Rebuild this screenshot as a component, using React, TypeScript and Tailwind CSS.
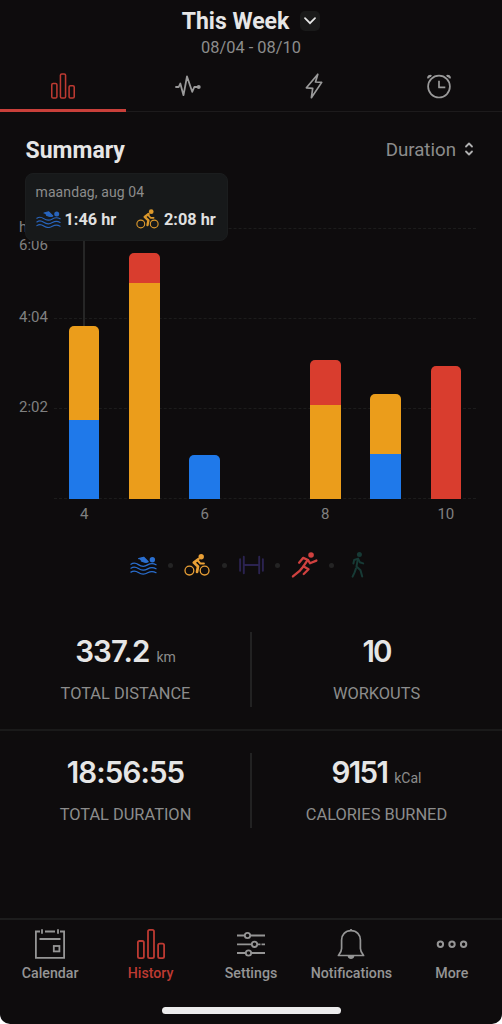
import React from "react";
import clsx from "clsx";

type IconProps = { className?: string };

const BarsIcon = ({ className }: IconProps) => (
  <svg viewBox="0 0 28 30" className={className} fill="none" stroke="currentColor" strokeWidth="1.8">
    <rect x="0.9" y="12" width="6" height="17.1" rx="1.6" />
    <rect x="11" y="0.9" width="6" height="28.2" rx="1.6" />
    <rect x="21.1" y="14.6" width="6" height="14.5" rx="1.6" />
  </svg>
);

const PulseIcon = () => (
  <svg viewBox="0 0 26 22" className="w-[26px] h-[22px]" fill="none" stroke="currentColor" strokeWidth="1.8" strokeLinecap="round" strokeLinejoin="round">
    <path d="M1 12h2.700L5.300 8.500 8.500 20.200 12 1.500l5.200 15.300L19.300 12H24" />
    <circle cx="23.700" cy="12" r="2" fill="currentColor" stroke="none" />
  </svg>
);

const BoltIcon = () => (
  <svg viewBox="0 0 18 26" className="w-[18px] h-[26px]" fill="none" stroke="currentColor" strokeWidth="1.7" strokeLinejoin="round">
    <path d="M12.8 1.2 1.4 14.8l6.3.5-1.3 9.4L16.7 9.4l-6.2-.4z" />
  </svg>
);

const AlarmIcon = () => (
  <svg viewBox="0 0 26 26" className="w-[26px] h-[26px]" fill="none" stroke="currentColor" strokeWidth="1.7" strokeLinejoin="round">
    <circle cx="13" cy="13.6" r="10.9" />
    <path d="M13 7.8v6.6h6.3" />
    <path d="M2.200 5.400a2.200 2.200 0 0 1 3.200-2.300M23.800 5.400a2.200 2.200 0 0 0-3.200-2.300" strokeWidth="2.200" />
  </svg>
);

const SwimIcon = ({ className }: IconProps) => (
  <svg viewBox="0 0 28 20" className={className} fill="none" stroke="currentColor" strokeWidth="1.300" strokeLinecap="round">
    <path d="M1 9.200c2.600-1.800 5-1.500 7.700.4 3.300 2.300 6.300 2.300 9.600.3 2.800-1.600 5.800-1.800 8.700-.1" />
    <path d="M1 13.300c2.600-1.800 5-1.500 7.700.4 3.300 2.300 6.300 2.300 9.600.3 2.800-1.600 5.800-1.800 8.700-.1" />
    <path d="M1 17.400c2.600-1.800 5-1.500 7.700.4 3.300 2.300 6.300 2.300 9.600.3 2.800-1.600 5.800-1.800 8.700-.1" />
    <path d="M9 3.300 14.200 2l4.600 4.600c-2.300 1.300-4.800.3-7-.8" fill="currentColor" stroke="currentColor" strokeLinejoin="round" />
    <circle cx="23.200" cy="4.500" r="2.800" fill="currentColor" stroke="none" />
  </svg>
);

const BikeIcon = ({ className }: IconProps) => (
  <svg viewBox="0 0 26 22" className={className} fill="none" stroke="currentColor" strokeLinecap="round" strokeLinejoin="round">
    <circle cx="5.4" cy="16.6" r="4.4" strokeWidth="1.3" />
    <circle cx="20.6" cy="16.6" r="4.4" strokeWidth="1.3" />
    <path d="m14.200 5.300-4.400 3.300 4.200 4-1 5.300" strokeWidth="2.700" />
    <path d="m13.400 6 3 3.600h3.500" strokeWidth="2" />
    <circle cx="17.2" cy="2.7" r="2.7" fill="currentColor" stroke="none" />
  </svg>
);

const DumbbellIcon = () => (
  <svg viewBox="0 0 28 20" className="w-[28px] h-[20px]" fill="none" stroke="currentColor" strokeWidth="2" strokeLinecap="round">
    <path d="M6.2 10h15.6M6 1.5v17M22 1.5v17M2.2 4v12M25.8 4v12" />
  </svg>
);

const RunIcon = () => (
  <svg viewBox="0 0 28 28" className="w-[28px] h-[28px]" fill="none" stroke="currentColor" strokeWidth="2.4" strokeLinecap="round" strokeLinejoin="round">
    <circle cx="20.8" cy="3.6" r="2.9" fill="currentColor" stroke="none" />
    <path d="m8.4 11.6 4.3-5 5 2.2 2 3.4 6.6-2.8" />
    <path d="m17.2 9-4.4 6.4 5.4 3-5 4.9" />
    <path d="m12.8 15.6-3.5 4.2-7.3 6.1" />
  </svg>
);

const WalkIcon = () => (
  <svg viewBox="0 0 14 28" className="w-[14px] h-[28px]" fill="none" stroke="currentColor" strokeWidth="2" strokeLinecap="round" strokeLinejoin="round">
    <circle cx="8.4" cy="3.6" r="2.5" fill="currentColor" stroke="none" />
    <path d="M2.4 12.5 3.2 9l3.9-1.4 1.6 3.6 3.5 1.2" />
    <path d="m6.8 8.4-1.300 7 4 3.800 1.700 6.400M4.900 17.600 3.600 21.400 1.600 25.600" />
  </svg>
);

const CalendarIcon = () => (
  <svg viewBox="0 0 30 30" className="w-[30px] h-[30px]" fill="none" stroke="currentColor" strokeWidth="1.8">
    <path d="M5 2.500H.9v26.300h28.200V2.500H25M10 2.500h10M7 .200v4.600M23 .200v4.600M4.500 10h21" />
    <rect x="18.800" y="17" width="5.600" height="5.400" />
  </svg>
);

const SettingsIcon = () => (
  <svg viewBox="0 0 30 30" className="w-[30px] h-[30px]" fill="none" stroke="currentColor" strokeWidth="1.8">
    <path d="M1 6.500h7.700M14.200 6.500H29M1 15.300h14.800M21.200 15.300H24.500M25.500 15.300H29M1 24h8.700M15.200 24H29" />
    <circle cx="11.500" cy="6.500" r="2.700" />
    <circle cx="18.500" cy="15.300" r="2.700" />
    <circle cx="12.500" cy="24" r="2.700" />
  </svg>
);

const BellIcon = () => (
  <svg viewBox="0 0 28 30" className="w-[28px] h-[30px]" fill="none" stroke="currentColor" strokeWidth="1.7" strokeLinejoin="round">
    <path d="M14 1.600C8.200 1.600 4.600 5.700 4.600 11v8.500C4.600 22.500 3 24.300 1.400 26.500h25.200C25 24.300 23.400 22.500 23.400 19.500V11c0-5.300-3.600-9.400-9.400-9.400z" />
    <path d="M11.500 27c.6 2.700 4.400 2.700 5 0z" fill="currentColor" />
    <path d="M14 0v1.600" />
  </svg>
);

const MoreIcon = () => (
  <svg viewBox="0 0 32 30" className="w-[32px] h-[30px]" fill="none" stroke="currentColor" strokeWidth="2">
    <circle cx="4.400" cy="15.300" r="2.700" />
    <circle cx="16" cy="15.300" r="2.700" />
    <circle cx="27.600" cy="15.300" r="2.700" />
  </svg>
);

const tabs = [
  { icon: <BarsIcon className="w-[24px] h-[26px]" />, active: true },
  { icon: <PulseIcon /> },
  { icon: <BoltIcon /> },
  { icon: <AlarmIcon /> },
];

// segment heights in px, listed from top to bottom
const days = [
  { label: "4", bars: [{ color: "bg-[#eb9d1b]", h: 94.5 }, { color: "bg-[#1f79ea]", h: 78.5 }] },
  { label: "", bars: [{ color: "bg-[#d93d2e]", h: 30 }, { color: "bg-[#eb9d1b]", h: 215.5 }] },
  { label: "6", bars: [{ color: "bg-[#1f79ea]", h: 43.5 }] },
  { label: "", bars: [] },
  { label: "8", bars: [{ color: "bg-[#d93d2e]", h: 45 }, { color: "bg-[#eb9d1b]", h: 93.5 }] },
  { label: "", bars: [{ color: "bg-[#eb9d1b]", h: 60.5 }, { color: "bg-[#1f79ea]", h: 44.5 }] },
  { label: "10", bars: [{ color: "bg-[#d93d2e]", h: 132.5 }] },
];

const legend = [
  { icon: <SwimIcon className="w-[28px] h-[20px]" />, color: "text-[#2a6fd0]" },
  { icon: <BikeIcon className="w-[26px] h-[22px]" />, color: "text-[#e9a036]" },
  { icon: <DumbbellIcon />, color: "text-[#2b2350]" },
  { icon: <RunIcon />, color: "text-[#d0413f]" },
  { icon: <WalkIcon />, color: "text-[#173a35]" },
];

const nav = [
  { label: "Calendar", icon: <CalendarIcon /> },
  { label: "History", icon: <BarsIcon className="w-[28px] h-[30px]" />, active: true },
  { label: "Settings", icon: <SettingsIcon /> },
  { label: "Notifications", icon: <BellIcon /> },
  { label: "More", icon: <MoreIcon /> },
];

const Stat = ({
  value,
  unit,
  label,
  tracking,
}: {
  value: string;
  unit?: string;
  label: string;
  tracking: string;
}) => (
  <div className="flex-1 flex flex-col items-center">
    <div className="h-[40px] flex items-baseline gap-[7px]">
      <span className={clsx("font-[Inter] font-semibold text-[29.500px] leading-[39px] text-[#e6e6e6]", tracking)}>
        {value}
      </span>
      {unit && <span className="text-[14px] text-[#8c8c8c]">{unit}</span>}
    </div>
    <div className="mt-[12px] text-[16.400px] leading-[20px] text-[#8c8c8c]">{label}</div>
  </div>
);

const StatRow = ({ children }: { children: React.ReactNode }) => (
  <div className="relative flex">
    {children}
    <div className="absolute left-[250px] top-0 w-[1.500px] h-[75px] bg-[#222222]" />
  </div>
);

const Chart = () => (
  <div className="relative mt-[54px] grid grid-cols-[54px_422px] h-[300px]">
    <div className="pl-[19px] text-[15px] leading-[18px] text-[#808080]">
      <div className="h-[90px]">
        hr
        <br />
        6:06
      </div>
      <div className="h-[90px]">4:04</div>
      <div className="h-[90px]">2:02</div>
    </div>
    <div className="col-start-2 row-start-1 pt-[10px]">
      {[0, 1, 2, 3].map((i) => (
        <div key={i} className="h-[90px] border-t border-dashed border-[#1c1c1c]" />
      ))}
    </div>
    <div className="col-start-2 row-start-1 z-10 h-[280.500px] grid grid-cols-7 items-end">
      {days.map((day, i) => (
        <div key={i} className="flex flex-col items-center">
          {i === 0 && <div className="w-[2px] h-[88px] bg-[#262626]" />}
          <div className="w-[30.500px] rounded-t-[5px] overflow-hidden">
            {day.bars.map((bar, j) => (
              <div key={j} className={bar.color} style={{ height: bar.h }} />
            ))}
          </div>
        </div>
      ))}
    </div>
    <div className="absolute z-20 left-[25px] -top-[45px] w-[203px] h-[68px] rounded-[8px] bg-[#17191a] border border-[#1b1d1e] pl-[9.500px] pt-[9px]">
      <div className="text-[14px] leading-[18px] tracking-[0.100px] text-[#8c8c8c]">maandag, aug 04</div>
      <div className="mt-[9px] flex items-center text-[16.300px] leading-[20px] font-bold text-[#e0e0e0]">
        <SwimIcon className="w-[25px] h-[18px] -mt-[3px] text-[#2864bd]" />
        <span className="ml-[4px] w-[71.500px]">1:46 hr</span>
        <BikeIcon className="w-[23px] h-[20px] -mt-[2px] text-[#db982c]" />
        <span className="ml-[5px]">2:08 hr</span>
      </div>
    </div>
  </div>
);

export default function App() {
  return (
    <div className="w-[502px] h-[1024px] bg-white overflow-hidden">
      <div className="h-full flex flex-col bg-[#0e0c0d] rounded-b-[10px] overflow-hidden font-[Roboto,sans-serif]">
        <header className="pt-[9px] flex flex-col items-center">
          <div className="flex items-center gap-[11px]">
            <h1 className="text-[23px] leading-[26px] font-bold text-[#e6e6e6]">This Week</h1>
            <div className="w-[20px] h-[20px] -mt-[2px] rounded-[5px] bg-[#1a1a1a] flex items-center justify-center">
              <svg viewBox="0 0 12 8" className="w-[12px] h-[8px]" fill="none" stroke="#e6e6e6" strokeWidth="1.700" strokeLinecap="round">
                <path d="m1 1.200 5 5 5-5" />
              </svg>
            </div>
          </div>
          <p className="mt-[3px] text-[16.400px] leading-[20px] text-[#8c8c8c]">08/04 - 08/10</p>
        </header>

        <div className="mt-[2px] h-[52px] flex border-b border-[#1d1b1c] text-[#9a9a9a]">
          {tabs.map((tab, i) => (
            <div
              key={i}
              className={clsx(
                "flex-1 h-[52px] pt-[3px] flex items-center justify-center border-b-[3px]",
                tab.active ? "text-[#bd3a32] border-[#c9403a]" : "border-transparent"
              )}
            >
              {tab.icon}
            </div>
          ))}
        </div>

        <div className="mt-[24px] h-[28px] pl-[25.500px] pr-[28px] flex items-center justify-between">
          <h2 className="pt-[1px] text-[23px] leading-[28px] font-bold text-[#e6e6e6]">Summary</h2>
          <div className="flex items-center gap-[8px] text-[18.700px] leading-[28px] text-[#8c8c8c]">
            Duration
            <svg viewBox="0 0 10 14" className="w-[10px] h-[14px] -mt-[3px]" fill="none" stroke="#b0b0b0" strokeWidth="1.800" strokeLinecap="round" strokeLinejoin="round">
              <path d="m2 4.500 3-3 3 3M2 9.500l3 3 3-3" />
            </svg>
          </div>
        </div>

        <Chart />

        <div className="-mt-[14px] ml-[54px] w-[422px] grid grid-cols-7 text-center text-[15px] leading-[20px] text-[#808080]">
          {days.map((day, i) => (
            <span key={i}>{day.label}</span>
          ))}
        </div>

        <div className="mt-[27px] h-[28px] flex items-center justify-center">
          {legend.map((item, i) => (
            <React.Fragment key={i}>
              {i > 0 && <span className="mx-[10.800px] w-[5px] h-[5px] rounded-full bg-[#242424]" />}
              <span className={clsx("w-[27px] flex justify-center", item.color)}>{item.icon}</span>
            </React.Fragment>
          ))}
        </div>

        <section className="mt-[53px]">
          <div className="h-[99px] border-b-2 border-[#1a1a1a]">
            <StatRow>
              <Stat value="337.2" unit="km" label="TOTAL DISTANCE" tracking="tracking-[-0.900px]" />
              <Stat value="10" label="WORKOUTS" tracking="tracking-[-2px]" />
            </StatRow>
          </div>
          <div className="pt-[22px]">
            <StatRow>
              <Stat value="18:56:55" label="TOTAL DURATION" tracking="tracking-[-0.900px]" />
              <Stat value="9151" unit="kCal" label="CALORIES BURNED" tracking="tracking-[-1.700px]" />
            </StatRow>
          </div>
        </section>

        <nav className="mt-auto h-[106px] border-t-2 border-[#1d1d1d] flex flex-col items-center">
          <div className="w-full grid grid-cols-5 pt-[9px]">
            {nav.map((item) => (
              <div
                key={item.label}
                className={clsx("flex flex-col items-center", item.active ? "text-[#bd3a32]" : "text-[#959595]")}
              >
                {item.icon}
                <span className="mt-[5px] text-[14.200px] leading-[18px] font-medium">{item.label}</span>
              </div>
            ))}
          </div>
          <div className="mt-auto mb-[10px] w-[179px] h-[7px] rounded-full bg-[#ececec]" />
        </nav>
      </div>
    </div>
  );
}
